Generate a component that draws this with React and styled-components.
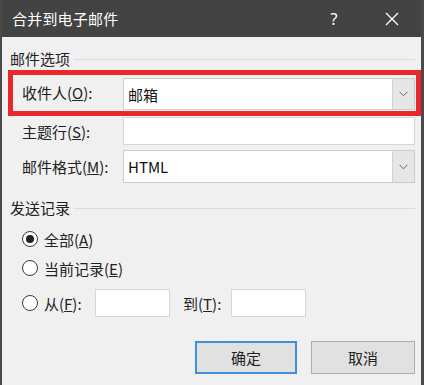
import React from 'react';
import styled, { createGlobalStyle } from 'styled-components';

const GlobalStyle = createGlobalStyle`
  html, body {
    margin: 0;
    padding: 0;
    background: #f0f0f0;
  }
  * {
    box-sizing: border-box;
  }
`;

const Window = styled.div`
  width: 424px;
  height: 385px;
  display: flex;
  flex-direction: column;
  background: #f0f0f0;
  border-left: 2px solid #4a4a4a;
  border-right: 3px solid #4a4a4a;
  font-family: "Noto Sans CJK SC", "Noto Sans", sans-serif;
  color: #222;
  font-size: 15px;
  overflow: hidden;
`;

const TitleBar = styled.div`
  height: 37px;
  flex: none;
  display: flex;
  align-items: center;
  background: #434343;
  color: #fff;
  margin: 0 -3px 0 -2px;
  padding: 0 3px 0 12px;
`;

const Title = styled.div`
  flex: 1;
  font-size: 15px;
  letter-spacing: 0.2px;
`;

const TitleButton = styled.div`
  width: 58px;
  height: 37px;
  display: flex;
  align-items: center;
  justify-content: center;
  font-family: "Noto Sans", sans-serif;
  font-size: 16px;
`;

const Content = styled.div`
  flex: 1;
  display: flex;
  flex-direction: column;
  padding-left: 6px;
`;

const GroupHeader = styled.div`
  display: flex;
  align-items: center;
  height: 20px;
  margin-top: ${(p) => p.$top}px;
  margin-right: 6px;
  padding-left: 2px;
  gap: 4px;
  color: #222;
`;

const GroupLine = styled.div`
  flex: 1;
  height: 1px;
  background: #dcdcdc;
  margin-top: 2px;
`;

const Highlight = styled.div`
  margin-top: 2px;
  border: 5px solid #e8282c;
  padding: 3px 1px 1px 9px;
`;

const FormRow = styled.div`
  display: grid;
  grid-template-columns: 101px 1fr;
  align-items: center;
`;

const Rows = styled.div`
  display: flex;
  flex-direction: column;
  gap: 5px;
  margin-top: 1px;
  padding: 0 6px 0 14px;
`;

const Label = styled.div`
  white-space: nowrap;
  margin-top: ${(p) => p.$shift || 0}px;
`;

const Combo = styled.div`
  height: ${(p) => p.$h}px;
  display: flex;
  align-items: stretch;
  background: #fff;
  border: 1px solid #cccccc;
`;

const ComboValue = styled.div`
  flex: 1;
  display: flex;
  align-items: center;
  padding-left: 4px;
  font-size: 15px;
  color: #111;
`;

const ComboArrow = styled.div`
  width: 22px;
  display: flex;
  align-items: center;
  justify-content: center;
  background: #e6e6e6;
  border-left: 1px solid #d2d2d2;
`;

const TextBox = styled.div`
  height: ${(p) => p.$h}px;
  width: ${(p) => (p.$w ? `${p.$w}px` : 'auto')};
  background: #fff;
  border: 1px solid #d6d6d6;
`;

const RadioList = styled.div`
  display: flex;
  flex-direction: column;
  margin-top: 10px;
  padding-left: 14px;
  gap: 5px;
`;

const RadioRow = styled.div`
  display: flex;
  align-items: center;
  height: ${(p) => p.$h || 24}px;
  margin-top: ${(p) => p.$top || 0}px;
`;

const RadioCircle = styled.div`
  width: 16px;
  height: 16px;
  flex: none;
  border-radius: 50%;
  border: 1px solid #3a3a3a;
  background: #fff;
  display: flex;
  align-items: center;
  justify-content: center;
  margin-right: 6px;
  &::after {
    content: '';
    display: ${(p) => (p.$checked ? 'block' : 'none')};
    width: 8px;
    height: 8px;
    border-radius: 50%;
    background: #222;
  }
`;

const RangeLabel = styled.div`
  width: ${(p) => p.$w}px;
  margin-left: ${(p) => p.$left || 0}px;
  white-space: nowrap;
`;

const Buttons = styled.div`
  display: flex;
  justify-content: flex-end;
  gap: 14px;
  margin-top: auto;
  margin-bottom: 11px;
  padding-right: 6px;
`;

const Button = styled.div`
  width: ${(p) => p.$w}px;
  height: 33px;
  display: flex;
  align-items: center;
  justify-content: center;
  background: #e1e1e1;
  border: ${(p) => (p.$primary ? '2px solid #3f8fdb' : '1px solid #adadad')};
  color: #222;
`;

const Chevron = () => (
  <svg width="9" height="6" viewBox="0 0 9 6">
    <path d="M0.5 0.8 L4.5 4.8 L8.5 0.8" fill="none" stroke="#666" strokeWidth="1" />
  </svg>
);

const CloseIcon = () => (
  <svg width="14" height="14" viewBox="0 0 14 14">
    <path d="M1 1 L13 13 M13 1 L1 13" stroke="#fff" strokeWidth="1.3" />
  </svg>
);

export default function App() {
  return (
    <>
      <GlobalStyle />
      <Window>
        <TitleBar>
          <Title>合并到电子邮件</Title>
          <TitleButton>?</TitleButton>
          <TitleButton><CloseIcon /></TitleButton>
        </TitleBar>
        <Content>
          <GroupHeader $top={11}>
            邮件选项
            <GroupLine />
          </GroupHeader>
          <Highlight>
            <FormRow>
              <Label $shift={-3}>收件人(<u>O</u>):</Label>
              <Combo $h={32}>
                <ComboValue>邮箱</ComboValue>
                <ComboArrow><Chevron /></ComboArrow>
              </Combo>
            </FormRow>
          </Highlight>
          <Rows>
            <FormRow>
              <Label>主题行(<u>S</u>):</Label>
              <TextBox $h={28} />
            </FormRow>
            <FormRow>
              <Label>邮件格式(<u>M</u>):</Label>
              <Combo $h={33}>
                <ComboValue>HTML</ComboValue>
                <ComboArrow><Chevron /></ComboArrow>
              </Combo>
            </FormRow>
          </Rows>
          <GroupHeader $top={14}>
            发送记录
            <GroupLine />
          </GroupHeader>
          <RadioList>
            <RadioRow>
              <RadioCircle $checked />
              全部(<u>A</u>)
            </RadioRow>
            <RadioRow>
              <RadioCircle />
              当前记录(<u>E</u>)
            </RadioRow>
            <RadioRow $h={28} $top={4}>
              <RadioCircle />
              <RangeLabel $w={51}>从(<u>F</u>):</RangeLabel>
              <TextBox $h={28} $w={75} />
              <RangeLabel $w={48} $left={13}>到(<u>T</u>):</RangeLabel>
              <TextBox $h={28} $w={75} />
            </RadioRow>
          </RadioList>
          <Buttons>
            <Button $w={102} $primary>确定</Button>
            <Button $w={104}>取消</Button>
          </Buttons>
        </Content>
      </Window>
    </>
  );
}
